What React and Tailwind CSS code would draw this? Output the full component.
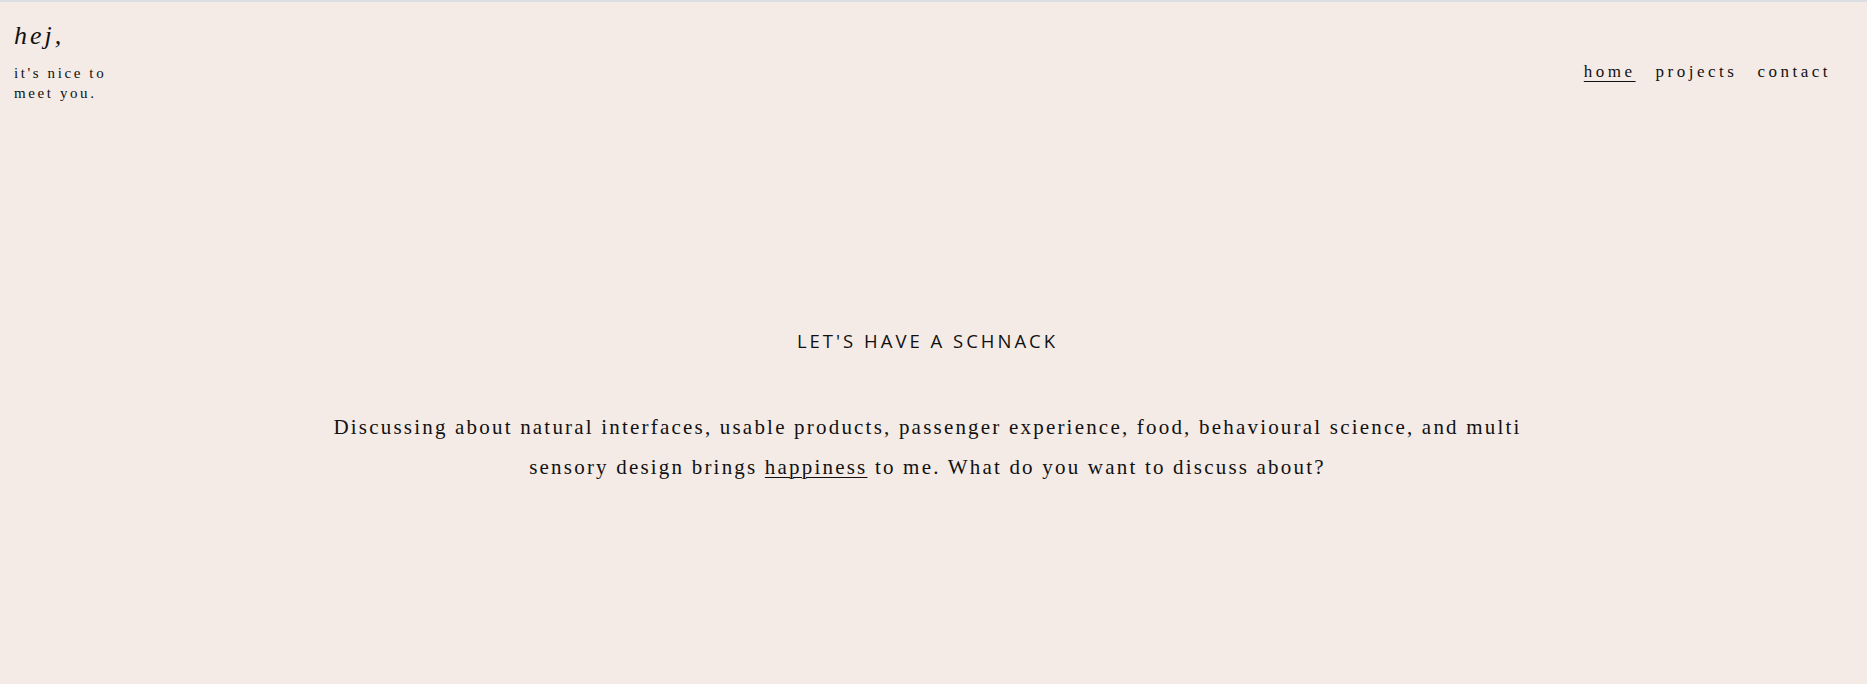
export default function App() {
  const serif = { fontFamily: '"Liberation Serif", "DejaVu Serif", serif' };
  return (
    <div className="min-h-[684px] bg-[#f4ebe6] border-t-2 border-[#dadde1] text-[#111]" style={serif}>
      {/* header */}
      <header className="flex justify-between items-start px-[14px] pt-[17px]">
        <div>
          <h1 className="italic text-[26px] leading-[34px] tracking-[3px]">hej,</h1>
          <p className="mt-[10px] text-[15px] leading-[20px] tracking-[2.6px] w-[100px]">
            it's nice to meet you.
          </p>
        </div>
        <nav className="flex gap-[20px] pt-[40px] pr-[22px] text-[17px] tracking-[3.5px]">
          <a className="underline underline-offset-[4px] decoration-1">home</a>
          <a>projects</a>
          <a>contact</a>
        </nav>
      </header>

      {/* main */}
      <main className="flex flex-col items-center pr-[12px] pt-[224px]">
        <h2
          className="text-[18.5px] font-medium tracking-[3px] uppercase"
          style={{ fontFamily: '"Open Sans", "Noto Sans", sans-serif' }}
        >
          Let's have a schnack
        </h2>
        <p className="mt-[52px] w-[1240px] text-center text-[21px] leading-[40px] tracking-[2.2px]">
          Discussing about natural interfaces, usable products, passenger experience, food, behavioural science, and multi sensory design brings{" "}
          <a className="underline underline-offset-[3px] decoration-1">happiness</a> to me. What do you want to discuss about?
        </p>
      </main>
    </div>
  );
}
